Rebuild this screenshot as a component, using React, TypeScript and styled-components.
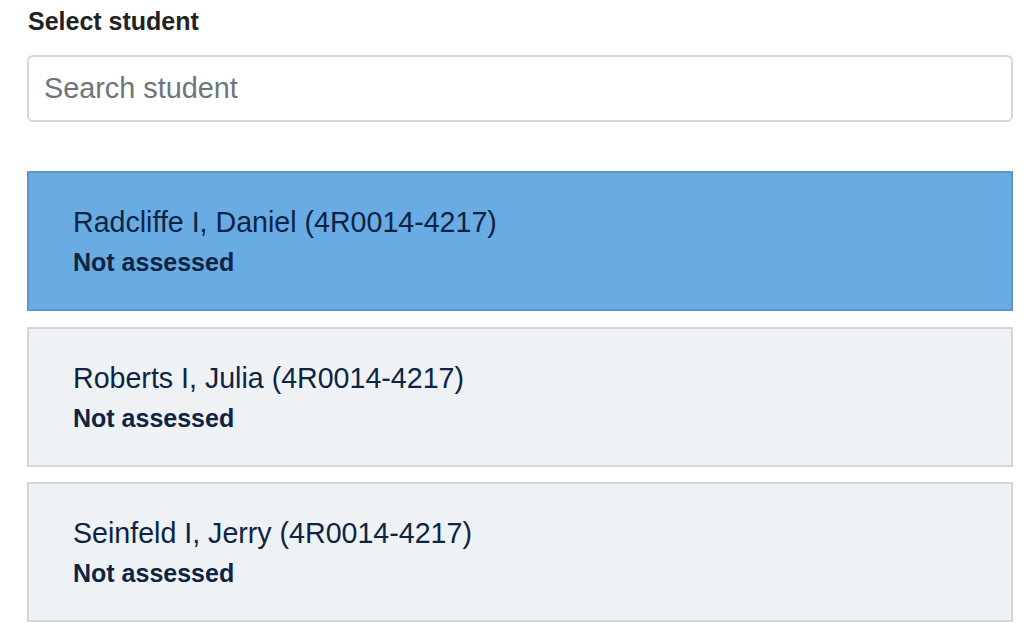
import { useState } from "react";
import styled, { createGlobalStyle } from "styled-components";

const GlobalStyle = createGlobalStyle`
  body {
    margin: 0;
    background: #ffffff;
    font-family: "Liberation Sans", Arial, sans-serif;
  }
`;

const Page = styled.div`
  padding: 7px 21px 0 27px;
  display: flex;
  flex-direction: column;
`;

const Label = styled.label`
  font-size: 25px;
  font-weight: 700;
  color: #222;
  line-height: 28px;
  margin: 0 0 20px 1px;
`;

const SearchInput = styled.input`
  box-sizing: border-box;
  height: 67px;
  width: 100%;
  padding: 0 15px;
  font-family: inherit;
  font-size: 28.8px;
  color: #212529;
  border: 2px solid #d4d7db;
  border-radius: 6px;
  outline: none;
  margin-bottom: 49px;
  &::placeholder {
    color: #6c757d;
  }
`;

const List = styled.div`
  display: flex;
  flex-direction: column;
  gap: 15.5px;
`;

const Card = styled.div<{ $selected: boolean }>`
  box-sizing: border-box;
  height: 140px;
  padding: 32px 44px;
  background: ${(p) => (p.$selected ? "#69abe3" : "#eef2f5")};
  border: 2px solid ${(p) => (p.$selected ? "#5d96c8" : "#d3d7db")};
  color: #0d2444;
  cursor: pointer;
`;

const Name = styled.div`
  font-size: 28.6px;
  line-height: 34px;
`;

const Status = styled.div`
  font-size: 25px;
  font-weight: 700;
  line-height: 30px;
  margin-top: 8px;
`;

const students = [
  { id: 1, name: "Radcliffe I, Daniel (4R0014-4217)", status: "Not assessed" },
  { id: 2, name: "Roberts I, Julia (4R0014-4217)", status: "Not assessed" },
  { id: 3, name: "Seinfeld I, Jerry (4R0014-4217)", status: "Not assessed" },
];

export default function App() {
  const [selected, setSelected] = useState(1);
  const [search, setSearch] = useState("");

  return (
    <Page>
      <GlobalStyle />
      <Label>Select student</Label>
      <SearchInput
        placeholder="Search student"
        value={search}
        onChange={(e) => setSearch(e.target.value)}
      />
      <List>
        {students.map((s) => (
          <Card key={s.id} $selected={s.id === selected} onClick={() => setSelected(s.id)}>
            <Name>{s.name}</Name>
            <Status>{s.status}</Status>
          </Card>
        ))}
      </List>
    </Page>
  );
}
